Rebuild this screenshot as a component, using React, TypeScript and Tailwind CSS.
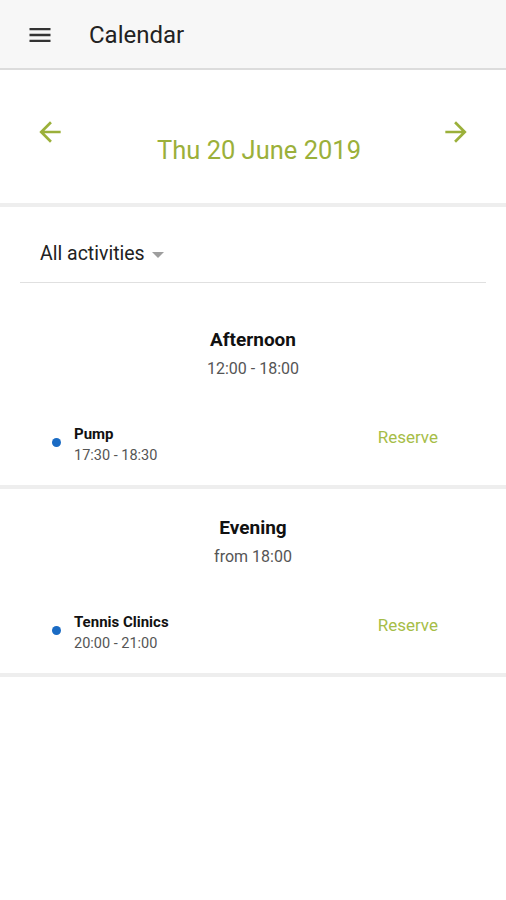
import React from 'react'

interface Activity {
  name: string
  time: string
}

interface Period {
  title: string
  range: string
  activities: Activity[]
}

const periods: Period[] = [
  { title: 'Afternoon', range: '12:00 - 18:00', activities: [{ name: 'Pump', time: '17:30 - 18:30' }] },
  { title: 'Evening', range: 'from 18:00', activities: [{ name: 'Tennis Clinics', time: '20:00 - 21:00' }] },
]

function Arrow({ dir }: { dir: 'left' | 'right' }) {
  return (
    <svg width="32" height="32" viewBox="0 0 24 24" className={dir === 'right' ? 'rotate-180' : ''}>
      <path fill="#9bb03a" d="M20 11H7.83l5.59-5.59L12 4l-8 8 8 8 1.41-1.41L7.83 13H20v-2z" />
    </svg>
  )
}

export default function App() {
  return (
    <div className="flex min-h-[900px] w-[506px] flex-col bg-white font-['Roboto',sans-serif] text-[#212121]">
      {/* toolbar */}
      <header className="flex h-[70px] items-center border-b-2 border-[#dcdcdc] bg-[#f7f7f7] pl-[26px] pt-[2px]">
        <svg width="28" height="28" viewBox="0 0 24 24">
          <path fill="#333" d="M3 18h18v-2H3v2zm0-5h18v-2H3v2zm0-7v2h18V6H3z" />
        </svg>
        <h1 className="ml-[35px] text-[24px] leading-none text-[#222]">Calendar</h1>
      </header>

      {/* date switcher */}
      <div className="flex h-[133px] justify-between px-[34px] pt-[46px]">
        <Arrow dir="left" />
        <p className="mt-[19px] pl-[12px] text-[25.5px] leading-[30px] text-[#9bb03a]">Thu 20 June 2019</p>
        <Arrow dir="right" />
      </div>
      <div className="h-[4px] bg-[#eeeeee]" />

      {/* filter */}
      <div className="mx-[20px] flex h-[76px] items-center border-b border-[#e0e0e0] pl-[20px] pt-[18px]">
        <span className="text-[19.5px] text-[#222]">All activities</span>
        <svg width="12" height="6" viewBox="0 0 12 6" className="ml-[7px] mt-[2px]">
          <path fill="#9e9e9e" d="M0 0h12L6 6z" />
        </svg>
      </div>

      {periods.map((p, i) => (
        <section key={p.title} className={i === 0 ? 'pt-[44px]' : 'pt-[26px]'}>
          <div className="text-center">
            <h2 className="text-[19px] font-bold leading-[26px] text-[#111]">{p.title}</h2>
            <p className="mt-[5px] text-[16px] leading-[22px] text-[#555]">{p.range}</p>
          </div>
          {p.activities.map((a) => (
            <div key={a.name} className="mt-[44px] flex items-center pl-[52px] pr-[68px]">
              <span className="mt-[-5px] h-[9px] w-[9px] rounded-full bg-[#1a6bc4]" />
              <div className="ml-[13px] flex-1">
                <p className="text-[15px] font-bold leading-[21px] text-[#111]">{a.name}</p>
                <p className="text-[14.5px] leading-[21px] text-[#555]">{a.time}</p>
              </div>
              <span className="mt-[-14px] text-[17px] text-[#a6bd47]">Reserve</span>
            </div>
          ))}
          <div className="mt-[19px] h-[4px] bg-[#eeeeee]" />
        </section>
      ))}
    </div>
  )
}
